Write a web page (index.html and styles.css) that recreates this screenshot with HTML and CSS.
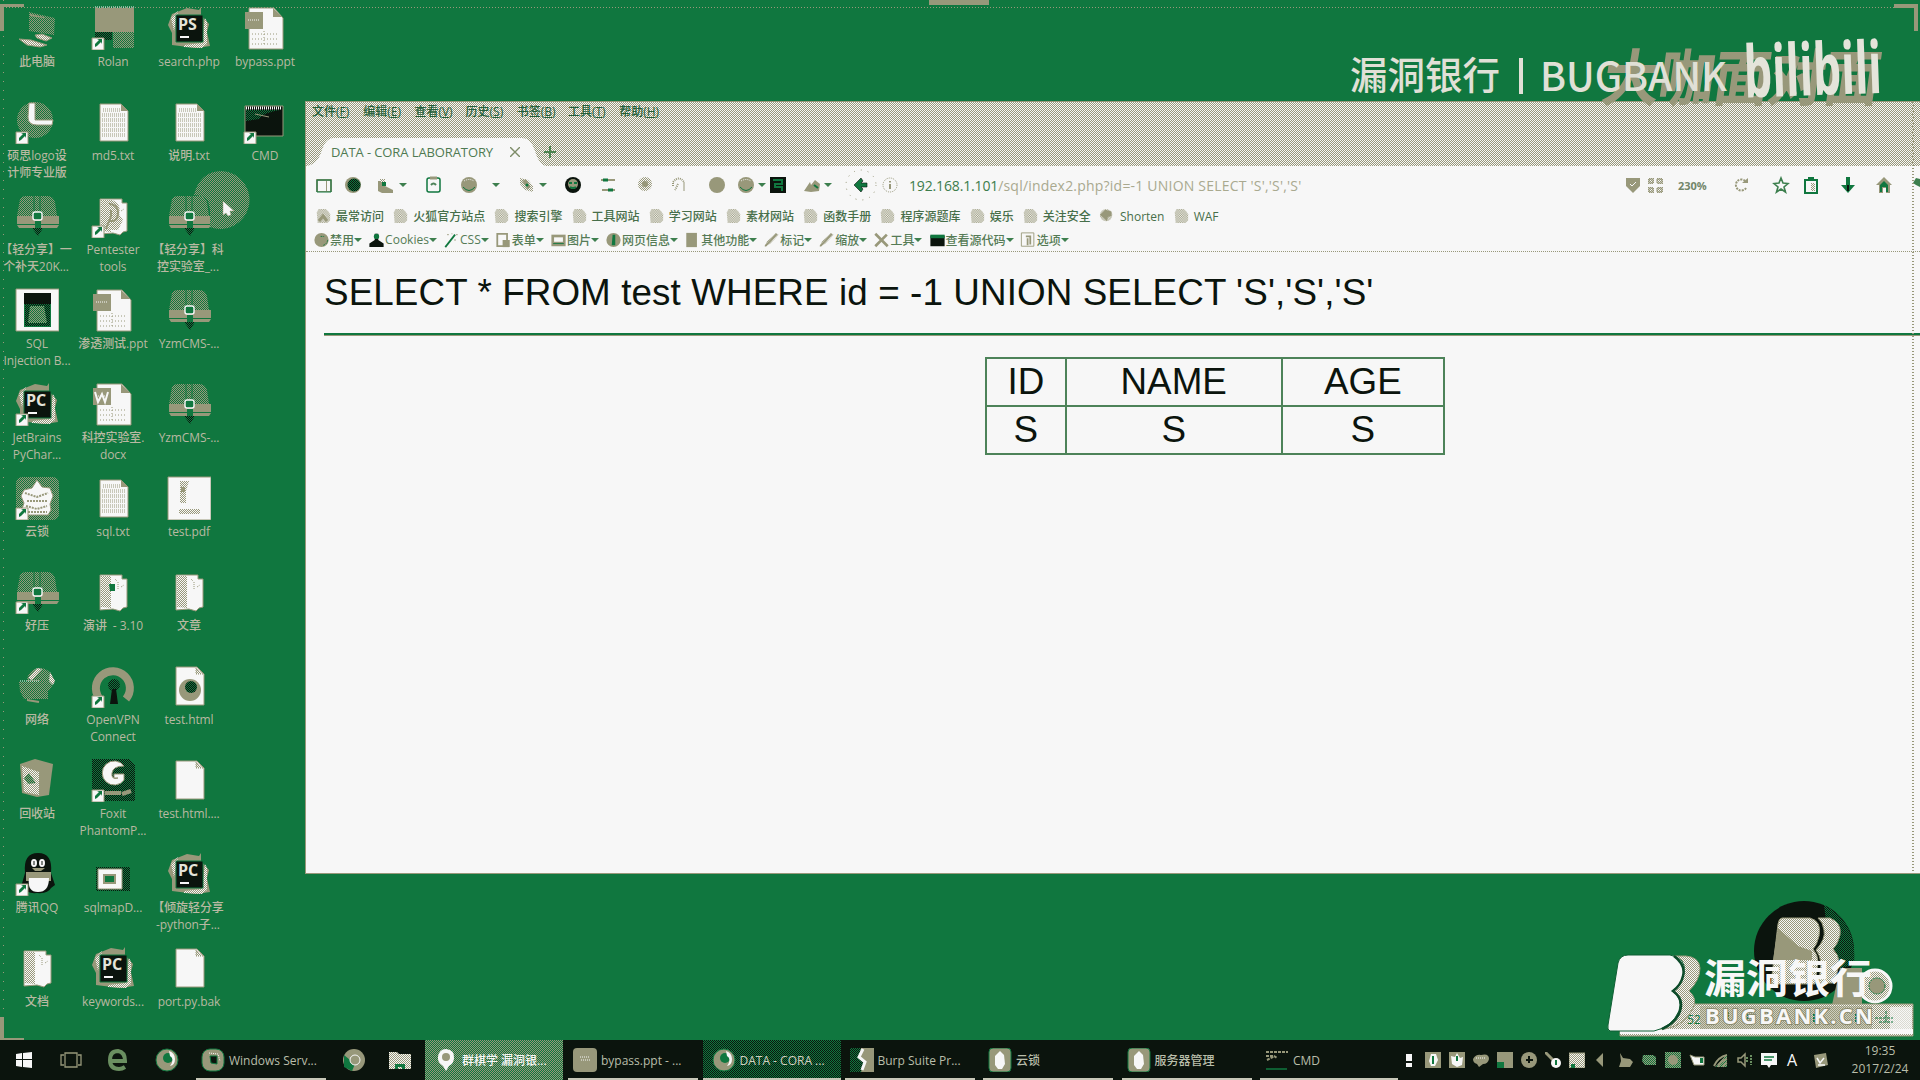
FILE: index.html
```html
<!DOCTYPE html>
<html lang="zh-CN">
<head>
<meta charset="utf-8">
<title>DATA - CORA LABORATORY</title>
<link rel="stylesheet" href="styles.css">
</head>
<body>
<svg class="defs" width="0" height="0" aria-hidden="true">
  <defs>
    <pattern id="tg" width="2" height="2" patternUnits="userSpaceOnUse"><rect width="2" height="2" fill="#10773f"/><path d="M0 0h1v1H0zM1 1h1v1H1z" fill="#98987a" shape-rendering="crispEdges"/></pattern>
    <pattern id="wt" width="2" height="2" patternUnits="userSpaceOnUse"><rect width="2" height="2" fill="#f7f7f7"/><path d="M0 0h1v1H0zM1 1h1v1H1z" fill="#98987a" shape-rendering="crispEdges"/></pattern>
    <pattern id="kg" width="2" height="2" patternUnits="userSpaceOnUse"><rect width="2" height="2" fill="#10773f"/><path d="M0 0h1v1H0zM1 1h1v1H1z" fill="#0b140d" shape-rendering="crispEdges"/></pattern>
  </defs>
  <symbol id="arrow" viewBox="0 0 44 44"><path d="M1 32h12v12H1z" fill="#f7f7f7" stroke="#98987a"/><path d="M4 41v-3l4-4-2-1h5v5l-1-2-4 4z" fill="#10773f"/></symbol>
  <symbol id="pc" viewBox="0 0 44 44"><path d="M14 6l26 6-1 17-25-4z" fill="url(#tg)"/><path d="M15 8l14 3v1l-14-2z" fill="#98987a"/><path d="M4 33l12 1 16 5-7 2-13-2zM20 29l7-1 10 4-6 3-9-3z" fill="url(#wt)" stroke="#98987a"/></symbol>
  <symbol id="rolan" viewBox="0 0 44 44"><path d="M4 2h39v24H4z" fill="#98987a"/><path d="M4 26h17v8H4z" fill="url(#kg)"/><path d="M22 26h21v16H22z" fill="url(#tg)"/><path d="M4 1h39" stroke="#f7f7f7" stroke-dasharray="1 1"/></symbol>
  <symbol id="jb" viewBox="0 0 44 44"><path d="M5 8L20 2l12 2 2-3v8l8 9-2 8 3 14-14 2-24-3 0-12-4-8z" fill="#98987a"/><path d="M38 12l2 4v22l-5 4-18-1 0-2 18-2zM4 12l7-7-4 20z" fill="url(#wt)"/><path d="M9 9h27v27H9z" fill="#0b140d" stroke="#10773f"/><path d="M13 31h9" stroke="#f7f7f7" stroke-width="2"/></symbol>
  <symbol id="ppt" viewBox="0 0 44 44"><path d="M6 2h25l9 10v31H6z" fill="#f7f7f7" stroke="#98987a"/><path d="M30 2v9h9z" fill="#98987a"/><path d="M2 6h18v17H2z" fill="#98987a"/><path d="M5 14h12" stroke="#f7f7f7" stroke-dasharray="1 1"/><path d="M9 28h26M9 33h26M9 38h26M21 25v14" stroke="#98987a" stroke-dasharray="1 2"/></symbol>
  <symbol id="docx" viewBox="0 0 44 44"><use href="#ppt"/><path d="M4 10l3 10 4-8 3 8 3-10" stroke="#f7f7f7" stroke-width="2" fill="none"/></symbol>
  <symbol id="txt" viewBox="0 0 44 44"><path d="M9 4h21l7 7v30H9z" fill="#f7f7f7" stroke="#98987a"/><path d="M12 9h18M12 11h18M11 14h23M11 16h23M11 19h23M11 21h23M11 24h23M11 26h23M11 29h23M11 31h23M11 34h23M11 36h23" stroke="#98987a" stroke-dasharray="1 1"/><path d="M30 4v7h7z" fill="#98987a"/></symbol>
  <symbol id="file" viewBox="0 0 44 44"><path d="M9 3h21l7 7v31H9z" fill="#f7f7f7" stroke="#98987a"/><path d="M29 4v6h7z" fill="url(#wt)" stroke="#98987a" stroke-dasharray="1 1"/></symbol>
  <symbol id="html" viewBox="0 0 44 44"><use href="#file"/><circle cx="23" cy="26" r="11" fill="#98987a"/><circle cx="24" cy="23" r="6" fill="url(#kg)"/></symbol>
  <symbol id="logo" viewBox="0 0 44 44"><circle cx="20" cy="20" r="18" fill="url(#tg)"/><path d="M14 3h6v17h18l-1 5H22q-9 0-9-8z" fill="#f7f7f7" stroke="#98987a"/></symbol>
  <symbol id="cmd" viewBox="0 0 44 44"><path d="M2 6h38v30H2z" fill="#0b140d" stroke="#98987a"/><path d="M3 8h36" stroke="#f7f7f7" stroke-width="3" stroke-dasharray="1 1"/><path d="M3 10h34q-18 3-21 9l-13 2z" fill="url(#kg)"/><path d="M12 14l14 3" stroke="#98987a"/></symbol>
  <symbol id="zip" viewBox="0 0 44 44"><path d="M5 5q2-3 6-3h22q5 0 7 6l2 14H2z" fill="url(#tg)"/><path d="M2 22h42v8H2zM2 31h42l-2 3H4z" fill="#98987a"/><path d="M19 2v16M25 2v16" stroke="#10773f"/><path d="M17 34h11l-5 8z" fill="url(#kg)"/><path d="M20 27h6v7h-6z" fill="#10773f"/><rect x="18" y="18" width="9" height="8" rx="2" fill="#10773f" stroke="#f7f7f7" stroke-width="1.400"/></symbol>
  <symbol id="folder" viewBox="0 0 44 44"><path d="M9 5h22v4h5v28l-4 1-3 3-7-2-13 1z" fill="#f7f7f7" stroke="#98987a"/><path d="M10 6h10v32l-10-1z" fill="url(#wt)"/><path d="M24 9l2 2M27 12v8M30 17l3-2" stroke="#98987a" stroke-dasharray="1 1"/></symbol>
  <symbol id="pent" viewBox="0 0 44 44"><use href="#folder"/><path d="M11 6h10q10 4 7 14l4 6-5 10H12z" fill="url(#wt)"/><path d="M18 10q9 0 9 9t-8 8 M20 16v6l-5 13" fill="none" stroke="#98987a" stroke-width="2"/></symbol>
  <symbol id="sql" viewBox="0 0 44 44"><path d="M1 1h43v42H1z" fill="#f7f7f7" stroke="#98987a"/><path d="M9 5h27v34H9z" fill="#10773f"/><path d="M9 5h27v11H9z" fill="#0b140d"/><path d="M10 38V16h25v22z" fill="url(#kg)"/><path d="M15 18h14l3 17H13z" fill="url(#tg)"/></symbol>
  <symbol id="lock" viewBox="0 0 44 44"><rect x="1" y="1" width="43" height="43" rx="6" fill="url(#tg)"/><path d="M22 4l5 7 8 1 3 8-3 8 1 6-3 5H10l-3-6 2-6-3-7 3-6 8-2z" fill="#f7f7f7" stroke="#98987a"/><path d="M10 17l12 4 11-4M12 25h20M11 30l11 3 10-3M13 36h19" stroke="#98987a" stroke-width="2" stroke-dasharray="2 1" fill="none"/></symbol>
  <symbol id="pdf" viewBox="0 0 44 44"><path d="M1 1h43v43H1z" fill="#f7f7f7" stroke="#98987a"/><path d="M13 5h9l-3 10v12h-6zM12 33h21v5H12z" fill="url(#wt)"/><path d="M14 11h4v5h-4z" fill="#98987a"/></symbol>
  <symbol id="globe" viewBox="0 0 44 44"><circle cx="25" cy="17" r="13" fill="url(#tg)"/><path d="M4 18h29v17H9l-4-8z" fill="url(#tg)"/><path d="M13 14l9-10 5 1-10 11zM35 8l5 9-2 4-4-4z" fill="url(#wt)"/><path d="M5 17h20" stroke="#f7f7f7" stroke-dasharray="1 1"/><path d="M12 36l12 2" stroke="#98987a" stroke-width="2"/></symbol>
  <symbol id="vpn" viewBox="0 0 44 44"><path d="M8 34A17 17 0 1 1 35 35" fill="none" stroke="#98987a" stroke-width="8"/><circle cx="23" cy="21" r="6" fill="url(#kg)"/><path d="M21 25h4l2 15h-8z" fill="#0b140d"/></symbol>
  <symbol id="bin" viewBox="0 0 44 44"><path d="M5 6l15-5 18 5-4 31-12 2-15-4z" fill="#98987a"/><path d="M7 8l17 6v23L9 34z" fill="url(#wt)"/><path d="M9 20l5-5 7 10-8 1z" fill="url(#tg)"/></symbol>
  <symbol id="foxit" viewBox="0 0 44 44"><path d="M1 1h37l6 6v36H1z" fill="url(#kg)"/><path d="M33 8A12 12 0 1 0 33 22v-6H23v4h4q-7 2-6-5t12-7z" fill="#f7f7f7" stroke="#98987a"/><path d="M14 35h16M31 36l9-3" stroke="#98987a" stroke-width="4"/></symbol>
  <symbol id="qq" viewBox="0 0 44 44"><path d="M10 21Q8 1 23 1t13 20l4 12-4 3q-3 6-14 5-10 1-13-5l-3-1z" fill="#0b140d"/><path d="M11 20h25v9H11z" fill="#98987a"/><path d="M14 26h20q0 14-11 14T14 26z" fill="#f7f7f7"/><ellipse cx="19" cy="11" rx="3" ry="4" fill="#f7f7f7"/><ellipse cx="27" cy="11" rx="3" ry="4" fill="#f7f7f7"/><path d="M19 9v4M27 9v4" stroke="#0b140d"/><path d="M17 16h13l-4 3h-6z" fill="#98987a"/></symbol>
  <symbol id="sqlmap" viewBox="0 0 44 44"><path d="M5 15h34v24H5z" fill="url(#kg)"/><path d="M7 17h24v20H7z" fill="#f7f7f7" stroke="#98987a"/><path d="M13 23h11v8H13z" fill="#10773f" stroke="#98987a" stroke-width="2"/></symbol>

  <symbol id="ball" viewBox="0 0 18 18"><circle cx="9" cy="9" r="8" fill="#98987a"/><path d="M3 11q6 7 12 0" stroke="#10773f" fill="none"/><path d="M4 5q5-3 10 0" stroke="#f7f7f7" stroke-dasharray="1 1" fill="none"/></symbol>
  <symbol id="fold" viewBox="0 0 18 18"><path d="M2 5l2-4h8l3 3 2 3v7l-3 3H3z" fill="url(#wt)"/></symbol>
  <symbol id="pen" viewBox="0 0 18 18"><path d="M1 17l3-7L14 1l3 2L8 13z" fill="url(#wt)"/><path d="M2 16L15 2" stroke="#98987a" stroke-width="2"/></symbol>
  <symbol id="ff" viewBox="0 0 24 24"><circle cx="12" cy="12" r="11" fill="#98987a" stroke="#10773f"/><circle cx="13" cy="10" r="5" fill="#10773f"/><path d="M14 3q6 2 6 8t-5 7q5-7 0-10z" fill="#f7f7f7"/></symbol>
  <symbol id="yun" viewBox="0 0 24 24"><rect x="1" y="0" width="22" height="24" rx="4" fill="#98987a" stroke="#10773f"/><path d="M12 3l4 4 1 9-3 5h-4l-3-4V8z" fill="#f7f7f7"/></symbol>
</svg>

<main class="desktop">
  <i class="edge edge-top"></i><i class="edge edge-left"></i><i class="notch"></i><i class="corner tl"></i><i class="corner tr"></i><i class="corner bl"></i>
  <section class="icons">
    <div class="ic"><svg><use href="#pc"/></svg><span>此电脑</span></div>
    <div class="ic"><svg><use href="#logo"/><use href="#arrow"/></svg><span>硕思logo设<br>计师专业版</span></div>
    <div class="ic"><svg><use href="#zip"/></svg><span class="cut">【轻分享】一<br>个补天20K...</span></div>
    <div class="ic"><svg><use href="#sql"/></svg><span>SQL<br>Injection B...</span></div>
    <div class="ic"><svg><use href="#jb"/><text x="11" y="24">PC</text><use href="#arrow"/></svg><span>JetBrains<br>PyChar...</span></div>
    <div class="ic"><svg><use href="#lock"/><use href="#arrow"/></svg><span>云锁</span></div>
    <div class="ic"><svg><use href="#zip"/><use href="#arrow"/></svg><span>好压</span></div>
    <div class="ic"><svg><use href="#globe"/></svg><span>网络</span></div>
    <div class="ic"><svg><use href="#bin"/></svg><span>回收站</span></div>
    <div class="ic"><svg><use href="#qq"/><use href="#arrow"/></svg><span>腾讯QQ</span></div>
    <div class="ic"><svg><use href="#folder"/></svg><span>文档</span></div>

    <div class="ic"><svg><use href="#rolan"/><use href="#arrow"/></svg><span>Rolan</span></div>
    <div class="ic"><svg><use href="#txt"/></svg><span>md5.txt</span></div>
    <div class="ic"><svg><use href="#pent"/><use href="#arrow"/></svg><span>Pentester<br>tools</span></div>
    <div class="ic"><svg><use href="#ppt"/></svg><span>渗透测试.ppt</span></div>
    <div class="ic"><svg><use href="#docx"/></svg><span>科控实验室.<br>docx</span></div>
    <div class="ic"><svg><use href="#txt"/></svg><span>sql.txt</span></div>
    <div class="ic"><svg><use href="#folder"/><path d="M18 14h6v7h-5z" fill="#10773f"/></svg><span>演讲&nbsp; - 3.10</span></div>
    <div class="ic"><svg><use href="#vpn"/><use href="#arrow"/></svg><span>OpenVPN<br>Connect</span></div>
    <div class="ic"><svg><use href="#foxit"/><use href="#arrow"/></svg><span>Foxit<br>PhantomP...</span></div>
    <div class="ic"><svg><use href="#sqlmap"/></svg><span>sqlmapD...</span></div>
    <div class="ic"><svg><use href="#jb"/><text x="11" y="24">PC</text></svg><span>keywords...</span></div>

    <div class="ic"><svg><use href="#jb"/><text x="11" y="24">PS</text></svg><span>search.php</span></div>
    <div class="ic"><svg><use href="#txt"/></svg><span>说明.txt</span></div>
    <div class="ic"><svg><use href="#zip"/></svg><span class="cut">【轻分享】科<br>控实验室_...</span></div>
    <div class="ic"><svg><use href="#zip"/></svg><span>YzmCMS-...</span></div>
    <div class="ic"><svg><use href="#zip"/></svg><span>YzmCMS-...</span></div>
    <div class="ic"><svg><use href="#pdf"/></svg><span>test.pdf</span></div>
    <div class="ic"><svg><use href="#folder"/></svg><span>文章</span></div>
    <div class="ic"><svg><use href="#html"/></svg><span>test.html</span></div>
    <div class="ic"><svg><use href="#file"/></svg><span>test.html....</span></div>
    <div class="ic"><svg><use href="#jb"/><text x="11" y="24">PC</text></svg><span class="cut">【倾旋轻分享<br>-python子...</span></div>
    <div class="ic"><svg><use href="#file"/></svg><span>port.py.bak</span></div>

    <div class="ic"><svg><use href="#ppt"/></svg><span>bypass.ppt</span></div>
    <div class="ic"><svg><use href="#cmd"/><use href="#arrow"/></svg><span>CMD</span></div>
  </section>

  <svg class="cursor" width="60" height="60"><path d="M30 1a29 29 0 1 1-12 56V40l-2-9q-5-6-14-6Q8 1 30 1z" fill="url(#tg)"/><path d="M31 31v14l3-2 2 3 3-1-1-4h4z" fill="#f7f7f7" stroke="#98987a" stroke-width=".5"/></svg>

  <section class="window">
    <nav class="menu"><span>文件(<u>F</u>)</span><span>编辑(<u>E</u>)</span><span>查看(<u>V</u>)</span><span>历史(<u>S</u>)</span><span>书签(<u>B</u>)</span><span>工具(<u>T</u>)</span><span>帮助(<u>H</u>)</span></nav>
    <div class="tabs">
      <div class="tab">
        <svg class="tabshape" width="240" height="28"><path d="M0 28q11-1 15-13Q19 0 28 0h188q9 0 13 13 4 14 11 15z" fill="#f7f7f7"/></svg>
        <span class="title">DATA - CORA LABORATORY</span>
        <svg width="10" height="10"><path d="M0 0l10 10M10 0L0 10" stroke="#7d8c68" stroke-width="1.4"/></svg>
      </div>
      <svg class="plus" width="14" height="12"><path d="M7 0v12M1 6h12" stroke="#4d8350" stroke-width="2"/></svg>
    </div>
    <div class="tools">
      <svg><path d="M1 3h16v13H1z" fill="#98987a"/><path d="M3 5h8v10H3zM12 5h3v10h-3z" fill="#f7f7f7"/><path d="M2 4h14v12H2z" fill="none" stroke="#10773f"/></svg>
      <svg><circle cx="9" cy="9" r="8" fill="#98987a"/><circle cx="10" cy="9" r="6.5" fill="url(#kg)"/></svg>
      <svg><path d="M1 15V5h7v5l8 4v3H5z" fill="#98987a"/><path d="M3 3h5v3H3z" fill="url(#wt)"/><path d="M5 6h4v4H5z" fill="#10773f"/></svg>
      <b></b>
      <svg><rect x="3" y="2" width="13" height="14" rx="2" fill="#f7f7f7" stroke="#10773f" stroke-width="1.5"/><path d="M6 2h7" stroke="#98987a" stroke-width="3"/><path d="M7 9q2.500-3 5 0" stroke="#4d8359" stroke-width="2" fill="none"/></svg>
      <svg><use href="#ball"/></svg>
      <b></b>
      <svg><path d="M2 2l8 2 5 6v6l-8-2-5-6z" fill="url(#wt)"/><path d="M6 4l5 8" stroke="#98987a" stroke-width="4"/><circle cx="9" cy="9" r="1.5" fill="#10773f"/></svg>
      <b></b>
      <svg><circle cx="9" cy="9" r="8" fill="#0b140d"/><circle cx="9" cy="8" r="5" fill="#98987a"/><path d="M5 7h3M10 7h3M6 11q3 2 6 0" stroke="#10773f" stroke-width="2" fill="none"/></svg>
      <svg><path d="M2 4h14M3 14h13" stroke="#98987a" stroke-width="2"/><path d="M4 4h5M9 14h5" stroke="#10773f" stroke-width="3"/></svg>
      <svg><circle cx="9" cy="8" r="7" fill="url(#wt)"/><circle cx="9" cy="8" r="3" fill="#98987a"/></svg>
      <svg><path d="M2 10V6q6-7 11 0v9M7 8l-3 6" stroke="#98987a" stroke-width="2" stroke-dasharray="1 1" fill="none"/></svg>
      <svg><circle cx="9" cy="9" r="8" fill="#98987a"/></svg>
      <svg><use href="#ball"/></svg>
      <b></b>
      <svg><path d="M1 1h16v16H1z" fill="#0b140d"/><path d="M4 4h9v4H6v3h7v4" fill="none" stroke="#10773f" stroke-width="2"/></svg>
      <svg><path d="M1 15l6-9 1 3 4-5 5 4-1 7-8 1z" fill="#98987a"/><path d="M11 9l4 3" stroke="#10773f" stroke-width="2"/></svg>
      <b></b>
      <svg class="back"><circle cx="16" cy="16" r="15" fill="none" stroke="#98987a" stroke-dasharray="1 6"/><path d="M9 16l7-7 2 3-2 2h6v4h-6l2 2-2 3z" fill="#10773f" stroke="#0b140d" stroke-width=".6"/></svg>
      <svg><circle cx="9" cy="9" r="7" fill="none" stroke="#98987a" stroke-dasharray="1 1"/><path d="M9 8v5M9 5v1.5" stroke="#98987a" stroke-width="2"/></svg>
      <span class="url"><em>192.168.1.101</em>/sql/index2.php?id=-1 UNION SELECT 'S','S','S'</span>
      <svg><path d="M2 2h14v8l-7 7-7-7z" fill="#98987a"/><path d="M6 8l2 2 4-4" stroke="#f7f7f7" fill="none"/></svg>
      <svg><path d="M1 2h6v6H1zM10 2h6v6h-6zM1 11h6v6H1zM10 11h6v6h-6z" fill="url(#wt)"/><path d="M2 3h4v4H2zM10 3h5v4h-5zM2 12h4v4H2zM10 12h5v4h-5z" fill="none" stroke="#98987a"/></svg>
      <span class="zoom">230%</span>
      <svg><path d="M13 12A5.500 5.500 0 1 1 13 6" fill="none" stroke="#98987a" stroke-width="2" stroke-dasharray="2 1"/><path d="M9 7h6V2z" fill="#98987a"/></svg>
      <svg><path d="M9 2l2 5 5 .5-4 3.500 1.500 5L9 13l-4.500 3L6 11 2 7.500 7 7z" fill="#f7f7f7" stroke="#3d7f4e" stroke-width="1.600"/></svg>
      <svg><path d="M3 4h12v13H3z" fill="#f7f7f7" stroke="#10773f" stroke-width="2"/><path d="M6 1h6v4H6z" fill="#10773f"/><path d="M9 7h4v8H9z" fill="url(#wt)"/></svg>
      <svg><path d="M7 1h4v8h5l-7 8-7-8h5z" fill="#10773f"/><path d="M9 9v6" stroke="#0b140d" stroke-width="2"/></svg>
      <svg><path d="M1 9l8-8 8 8h-2v8h-4v-5H8v5H4V9z" fill="#98987a"/><path d="M5 9l4-4 4 4v7h-2v-5H7v5H5z" fill="#10773f"/></svg>
      <svg class="edgeicon"><path d="M1 7l3-5 4 1v8L4 9z" fill="#3d7f4e"/></svg>
    </div>
    <div class="bookmarks">
      <span><svg><use href="#fold"/><path d="M4 13l4-5 4 5" stroke="#98987a" stroke-width="3" fill="none"/></svg>最常访问</span><span><svg><use href="#fold"/></svg>火狐官方站点</span><span><svg><use href="#fold"/></svg>搜索引擎</span><span><svg><use href="#fold"/></svg>工具网站</span><span><svg><use href="#fold"/></svg>学习网站</span><span><svg><use href="#fold"/></svg>素材网站</span><span><svg><use href="#fold"/></svg>函数手册</span><span><svg><use href="#fold"/></svg>程序源题库</span><span><svg><use href="#fold"/></svg>娱乐</span><span><svg><use href="#fold"/></svg>关注安全</span><span><svg viewBox="0 0 18 18"><circle cx="8" cy="8" r="7" fill="url(#wt)"/><path d="M1 8l6-6 7 2v5l-4 1-1 5-4-4z" fill="#98987a"/></svg>Shorten</span><span><svg><use href="#fold"/></svg>WAF</span>
    </div>
    <div class="devbar">
      <span><svg viewBox="0 0 18 18"><circle cx="9" cy="9" r="8" fill="#98987a"/><path d="M11 15q5-2 5-7M8 5h4" stroke="#10773f" fill="none" stroke-dasharray="2 1"/></svg>禁用<b></b></span>
      <span><svg viewBox="0 0 18 18"><path d="M7 2h4v7l6 4v4H1v-4l6-4z" fill="#0b140d"/><circle cx="9" cy="5" r="3" fill="#10773f"/></svg>Cookies<b></b></span>
      <span><svg viewBox="0 0 18 18"><path d="M2 17L13 3" stroke="#10773f" stroke-width="2"/><path d="M4 3h2M12 9h2M9 2h1M14 3h2" stroke="#98987a"/></svg>CSS<b></b></span>
      <span><svg viewBox="0 0 18 18"><path d="M2 2h11v14H2z" fill="#f7f7f7" stroke="#98987a" stroke-width="2"/><path d="M8 9h8v8H8z" fill="#98987a"/></svg>表单<b></b></span>
      <span><svg viewBox="0 0 18 18"><path d="M1 3h16v13H1z" fill="#98987a"/><path d="M4 6h10v5H4z" fill="#f7f7f7"/><path d="M3 13h12" stroke="#10773f"/></svg>图片<b></b></span>
      <span><svg viewBox="0 0 18 18"><circle cx="9" cy="9" r="8" fill="#98987a"/><path d="M8 3h3v12H7z" fill="#10773f"/></svg>网页信息<b></b></span>
      <span><svg viewBox="0 0 18 18"><path d="M2 1h12v16H2z" fill="#98987a"/></svg>其他功能<b></b></span>
      <span><svg viewBox="0 0 18 18"><use href="#pen"/></svg>标记<b></b></span>
      <span><svg viewBox="0 0 18 18"><use href="#pen"/></svg>缩放<b></b></span>
      <span><svg viewBox="0 0 18 18"><path d="M2 2l14 14M15 3L2 16" stroke="#98987a" stroke-width="3"/></svg>工具<b></b></span>
      <span><svg viewBox="0 0 18 18"><path d="M1 4h16v12H1z" fill="#0b140d"/><path d="M1 3h16v4H1z" fill="#10773f"/></svg>查看源代码<b></b></span>
      <span><svg viewBox="0 0 18 18"><path d="M1 1h14v15H1z" fill="#f7f7f7" stroke="#98987a"/><path d="M6 5h5v9M8 7v8" stroke="#98987a" stroke-width="2" fill="none"/></svg>选项<b></b></span>
    </div>
    <article class="page">
      <p>SELECT * FROM test WHERE id = -1 UNION SELECT 'S','S','S'</p>
      <hr>
      <table><tr><td class="c1">ID</td><td class="c2">NAME</td><td class="c3">AGE</td></tr><tr><td>S</td><td>S</td><td>S</td></tr></table>
    </article>
    <i class="rule"></i>
  </section>

  <svg class="watermark" width="579" height="110">
    <g transform="skewX(-8)"><text x="271" y="76" class="show" textLength="276" lengthAdjust="spacingAndGlyphs">大咖面对面</text></g>
    <text x="9" y="65" class="bank-cn" textLength="150" lengthAdjust="spacingAndGlyphs">漏洞银行</text>
    <path d="M180 34v36" stroke="#e0e0d6" stroke-width="4"/>
    <text x="199" y="67" class="bank-en" textLength="187" lengthAdjust="spacingAndGlyphs">BUGBANK</text>
    <text x="403" y="71" class="bili" textLength="138" lengthAdjust="spacingAndGlyphs" transform="rotate(-2 475 50)">bilibili</text>
  </svg>

  <svg class="brand" width="320" height="150">
    <circle cx="204" cy="61" r="50" fill="#0b140d"/>
    <path d="M224 15q34 18 30 60l-22 5z" fill="url(#kg)"/>
    <path d="M182 28h28q12 3 9 18-2 9-6 13 5 6 5 13l-3 22h-44l7-60q1-6 4-6z" fill="url(#wt)" stroke="#98987a"/>
    <path d="M178 38l20 18 14 5v9h-39z" fill="#98987a"/>
    <path d="M218 28h12q12 5 10 17-2 9-7 14 6 6 6 14l-4 20h-16l2-20q-1-8-5-13 10-11 8-20-1-8-6-12z" fill="url(#wt)" stroke="#98987a"/>
    <circle cx="275" cy="96" r="16" fill="url(#wt)" stroke="#f7f7f7" stroke-width="3"/><circle cx="277" cy="96" r="8" fill="#98987a" stroke="#10773f" stroke-dasharray="2 1"/>
    <path d="M240 78h22v37h-30z" fill="#98987a"/>
    <path d="M20 114h293v32H20z" fill="url(#wt)" stroke="#98987a"/>
    <path d="M100 116h172v24H100z" fill="#98987a" opacity=".45"/>
    <path d="M60 139h253v5H20v-5z" fill="#f7f7f7"/><path d="M290 117h22v24h-22z" fill="#f7f7f7" opacity=".7"/>
    <text x="87" y="134" class="small">52</text><path d="M275 128h18M286 121v12M279 132h14" stroke="#10773f" stroke-dasharray="3 1"/>
    <path d="M128 122v12M148 124v9M196 122v12M214 124v8M256 124v9" stroke="#10773f" stroke-width="2" stroke-dasharray="2 1"/>
    <path d="M74 66h12q13 1 14 12 0 12-11 23 9 8 4 17-7 17-28 21H41l30-30z" fill="url(#wt)" stroke="#98987a"/>
    <path d="M28 65h42q17 3 14 18-2 12-12 18 11 7 7 20-7 16-25 20H10q-3-1-2-6L18 73q2-8 10-8z" fill="#f7f7f7" stroke="#0f5f34"/>
    <path d="M74 66q12 9 9 20-2 9-10 15 11 8 7 20-4 12-18 18" fill="none" stroke="#0c4a29" stroke-width="2.500"/>
    <text x="104" y="103" class="b-cn" textLength="168" lengthAdjust="spacingAndGlyphs">漏洞银行</text>
    <text x="105" y="134" class="b-en" textLength="168" lengthAdjust="spacing">BUGBANK.CN</text>
  </svg>

  <footer class="taskbar">
    <div class="launch">
      <svg width="18" height="18" viewBox="0 0 18 18"><path d="M1 3l6-1v6H1zM8 2l9-1v7H8zM1 9h6v7l-6-1zM8 9h9v8l-9-1z" fill="#f7f7f7"/></svg>
      <svg width="22" height="16" viewBox="0 0 22 16"><path d="M5 1h12v14H5zM4 3H1v10h3M18 3h3v10h-3" fill="none" stroke="#98987a" stroke-width="1.300"/></svg>
      <svg width="20" height="22" viewBox="0 0 20 22"><path d="M3 12h14q0-9-7-10-8 0-8 9 0 9 9 9 3 0 6-2" fill="none" stroke="#6a8f60" stroke-width="4"/></svg>
      <svg width="24" height="24"><use href="#ff"/></svg>
    </div>
    <div class="task open"><svg viewBox="0 0 24 24"><rect x="1" y="1" width="22" height="22" rx="8" fill="#98987a" stroke="#10773f"/><path d="M9 8h7v8l-6-1z" fill="#0b140d" stroke="#10773f"/><path d="M8 5l9 1 2 7" stroke="#f7f7f7" stroke-dasharray="1 1" fill="none"/></svg><span>Windows Serv...</span></div>
    <div class="pins">
      <svg width="24" height="24"><circle cx="12" cy="12" r="11" fill="#98987a"/><path d="M2 7v12l8 4 3-7z" fill="#10773f"/><circle cx="13" cy="12" r="5" fill="#98987a" stroke="#f7f7f7"/></svg>
      <svg width="24" height="20"><path d="M1 2h8l2 2h12v15H1z" fill="url(#wt)"/><path d="M7 19v-5h10v5h-3v-2h-4v2z" fill="#10773f"/></svg>
    </div>
    <div class="task alert"><svg viewBox="0 0 24 24"><path d="M12 1q9 1 8 9 0 5-5 8l-3 5-3-5q-6-4-5-9 1-8 8-8z" fill="#f7f7f7"/><circle cx="12" cy="9" r="4" fill="#98987a"/></svg><span>群棋学 漏洞银...</span></div>
    <div class="task open"><svg viewBox="0 0 24 24"><rect width="24" height="24" rx="4" fill="#98987a"/><path d="M7 9h10M8 12h9" stroke="#f7f7f7" stroke-dasharray="1 1"/></svg><span>bypass.ppt - ...</span></div>
    <div class="task open on"><svg><use href="#ff"/></svg><span>DATA - CORA ...</span></div>
    <div class="task open"><svg viewBox="0 0 24 24"><path d="M0 0h24v24H0z" fill="#98987a"/><path d="M0 0h11l-2 9 5 4-3 11H0z" fill="url(#kg)"/><path d="M13 1l-4 8 6 5-3 8" stroke="#f7f7f7" stroke-width="3" fill="none"/></svg><span>Burp Suite Pr...</span></div>
    <div class="task open"><svg><use href="#yun"/></svg><span>云锁</span></div>
    <div class="task open"><svg><use href="#yun"/></svg><span>服务器管理</span></div>
    <div class="task open last"><svg viewBox="0 0 24 24"><path d="M1 4h22M1 8h8l3 2M2 12l8-4" stroke="#98987a" stroke-width="2" stroke-dasharray="3 1" fill="none"/><path d="M1 21h21" stroke="#10773f" stroke-width="1.500"/></svg><span>CMD</span></div>
    <div class="tray">
      <svg><path d="M5 2h6v7H5zM5 11h6v4H5z" fill="#f7f7f7"/></svg>
      <svg><path d="M0 0h16v16H0z" fill="#98987a"/><path d="M6 2h5l2 6-3 6H6L4 9z" fill="#f7f7f7"/><path d="M8 4v8" stroke="#10773f" stroke-width="2"/></svg>
      <svg><path d="M0 0h16v16H0z" fill="#98987a"/><path d="M2 4l4 1 2-4 3 5 3-1-1 8-5 2-5-3z" fill="#f7f7f7"/><path d="M8 4v5" stroke="#10773f" stroke-width="2"/></svg>
      <svg><path d="M0 7q3-5 8-4 8-2 8 4-1 5-6 5l-4 3-2-3q-4-1-4-5z" fill="#98987a"/><path d="M3 6h9" stroke="#f7f7f7" stroke-dasharray="1 1"/></svg>
      <svg><path d="M0 0h16v16H0z" fill="#98987a"/><path d="M0 10h7v6H0z" fill="#10773f"/></svg>
      <svg><circle cx="8" cy="8" r="8" fill="#98987a"/><path d="M8 4v7M5 8h7" stroke="#0b140d" stroke-width="2"/></svg>
      <svg><path d="M0 0l8 8" stroke="#98987a" stroke-width="3"/><circle cx="11" cy="11" r="5" fill="#f7f7f7"/><path d="M11 8v5" stroke="#10773f" stroke-width="2"/></svg>
      <svg><path d="M0 1h16v15H0z" fill="url(#wt)" stroke="#98987a"/><path d="M2 16v-4h4v4" fill="#10773f"/></svg>
      <svg><path d="M11 1v14L4 8z" fill="#98987a"/></svg>
      <svg><path d="M3 1l3 5 7 1 3 3-3 5H2l2-6z" fill="#98987a"/></svg>
      <svg><path d="M2 3h10l3 2v8H4L1 9z" fill="url(#tg)"/></svg>
      <svg><path d="M0 0h16v16H0z" fill="url(#tg)"/><circle cx="8" cy="8" r="5" fill="#98987a"/></svg>
      <svg><path d="M1 3l5 2h9v8H5z" fill="#f7f7f7" stroke="#98987a"/><path d="M11 6h3v5h-3z" fill="#10773f"/></svg>
      <svg><path d="M2 15L14 2v13z" fill="url(#tg)"/><path d="M1 14Q5 5 14 3M5 15q2-6 9-8M10 15q1-3 4-4" fill="none" stroke="#98987a" stroke-width="2"/></svg>
      <svg><path d="M1 6h3l4-4v12l-4-4H1z" fill="none" stroke="#98987a" stroke-width="1.500"/><path d="M10 5v6M14 3v10" stroke="#6a8f60" stroke-width="2" stroke-dasharray="2 1"/></svg>
      <svg><path d="M0 1h16v12h-6l-2 3-2-3H0z" fill="#f7f7f7"/><path d="M3 5h10M3 8h8" stroke="#10773f" stroke-width="1.500"/></svg>
      <strong>A</strong>
      <svg><path d="M1 3l12-2 2 12-12 3z" fill="#98987a"/><path d="M4 6l3 5 4-5M5 13h7" stroke="#f7f7f7" fill="none" stroke-width="1.500"/></svg>
    </div>
    <time>19:35<br>2017/2/24</time>
  </footer>
</main>
</body>
</html>
```
FILE: styles.css
```css
:root { --green: #10773f; --dark: #0b140d; --tan: #98987a; --white: #f7f7f7; }
* { box-sizing: border-box; }
body { margin: 0; background: var(--green); font-family: "Open Sans", "Noto Sans CJK SC", sans-serif; font-size: 12px; overflow: hidden; }
svg { display: block; flex: none; }
.defs { position: absolute; }
.desktop { position: relative; width: 1920px; height: 1080px; overflow: hidden; background: var(--green); }

.edge, .notch, .corner { position: absolute; }
.edge-top { top: 7px; left: 0; width: 1920px; height: 1px; background: repeating-linear-gradient(90deg, var(--tan) 0 1px, transparent 1px 3px); }
.edge-left { top: 0; left: 3px; width: 1px; height: 1040px; background: repeating-linear-gradient(var(--tan) 0 1px, transparent 1px 9px); }
.notch { top: 0; left: 929px; width: 60px; height: 5px; background: var(--tan); }
.corner { width: 24px; height: 27px; border: 0 solid var(--tan); }
.tl { left: 0; top: 4px; border-width: 3px 0 0 4px; }
.tr { right: 2px; top: 4px; border-width: 4px 4px 0 0; }
.bl { left: 0; top: 1017px; height: 23px; border-width: 0 0 2px 4px; }

.icons { position: absolute; left: -1px; top: 6px; display: grid; grid-auto-flow: column; grid-template-rows: repeat(11, 94px); grid-auto-columns: 76px; }
.ic { display: flex; flex-direction: column; align-items: center; gap: 3px; color: #b9b9a2; font-weight: 500; line-height: 17px; text-align: center; white-space: nowrap; letter-spacing: -.1px; }
.ic svg { width: 44px; height: 44px; }
.ic text { font: 700 16px "Open Sans", sans-serif; fill: #e4e4d9; letter-spacing: 0; }
.cut { margin-left: -2px; }
.cursor { position: absolute; left: 192px; top: 170px; }

.window { position: absolute; left: 305px; top: 101px; width: 1615px; height: 773px; display: flex; flex-direction: column; border: solid var(--tan); border-width: 1px 0 1px 1px; background: var(--white); overflow: hidden; }
.menu, .tabs { background: repeating-conic-gradient(var(--tan) 0 25%, var(--white) 0 50%) 0 0 / 2px 2px; }
.menu { display: flex; height: 36px; padding-left: 6px; line-height: 20px; color: #235f38; font-size: 12px; font-weight: 500; }
.menu span { width: 51.200px; white-space: nowrap; }
.tabs { display: flex; height: 28px; }
.tab { position: relative; display: flex; align-items: center; width: 240px; padding-left: 25px; justify-content: space-between; padding-right: 26px; }
.tabshape { position: absolute; left: 0; top: 0; }
.tab > :not(.tabshape) { position: relative; }
.title { color: #4f7a52; font-size: 13px; font-weight: 500; letter-spacing: -.1px; white-space: nowrap; }
.plus { margin: 8px 0 0 -3px; }
.tools { display: grid; align-items: center; height: 38px; padding-left: 9px; grid-template-columns: 29px 33px 22px 25px 36px 32px 26px 21px 25px 35px 37px 35px 37px 29px 21px 11px 34px 21px 21px 36px 28px 715px 23px 27px 59px 39px 30px 37px 36px 37px; grid-auto-flow: column; }
.tools svg { width: 18px; height: 18px; }
.tools svg.back { width: 32px; height: 32px; }
.tools svg.edgeicon { width: 8px; }
b { display: block; border: 4px solid transparent; border-top: 4px solid #3d7f4e; border-bottom: 0; width: 0; height: 0; }
.url { font-size: 14px; color: #a9a98f; letter-spacing: .21px; white-space: nowrap; }
.url em { font-style: normal; color: #3c7c4b; letter-spacing: -.15px; }
.zoom { font: 700 11px "Open Sans", sans-serif; color: #72866a; padding-left: 4px; }
.bookmarks { display: flex; align-items: center; height: 24px; padding-left: 9px; gap: 8.200px; color: #476f4a; font-weight: 500; }
.bookmarks span { display: flex; align-items: center; gap: 5px; white-space: nowrap; }
.bookmarks svg { width: 16px; height: 16px; }
.devbar { display: flex; align-items: center; height: 24px; padding-left: 7px; gap: 6.100px; color: #557b55; font-weight: 500; border-bottom: 1px dotted var(--tan); }
.devbar span { display: flex; align-items: center; white-space: nowrap; }
.devbar svg { width: 17px; height: 16px; }
.page { font: 36.800px "Liberation Sans", sans-serif; color: var(--dark); padding: 20px 0 0 18px; }
.page p { margin: 0; line-height: 42px; white-space: nowrap; letter-spacing: .1px; }
.page hr { margin: 19px 0 21px; border: 0; height: 3px; background: var(--green); border-bottom: 1px solid var(--tan); }
.page table { margin-left: 661px; width: 460px; border-collapse: collapse; border: 2px solid #4d8359; }
.page td { height: 48px; padding: 0; text-align: center; border: 2px solid #4d8359; line-height: 44px; }
.c1 { width: 80px; } .c2 { width: 217px; } .c3 { width: 163px; }
.rule { position: absolute; right: 6px; top: 0; bottom: 0; width: 2px; background: repeating-linear-gradient(var(--tan) 0 1px, transparent 1px 3px); }

.watermark { position: absolute; left: 1341px; top: 24px; }
.show { font: 500 60px "Noto Sans CJK SC", sans-serif; fill: var(--tan); stroke: var(--tan); stroke-width: 2px; }
.bank-cn { font: 500 38px "Noto Sans CJK SC", sans-serif; fill: #e0e0d6; }
.bank-en { font: 500 40px "Noto Sans CJK SC", sans-serif; fill: #e0e0d6; }
.bili { font: 700 72px "Open Sans", sans-serif; fill: #e4e4da; }
.brand { position: absolute; left: 1600px; top: 890px; }
.b-cn { font: 700 40px "Noto Sans CJK SC", sans-serif; fill: var(--white); }
.b-en { font: 700 22px "Open Sans", sans-serif; fill: var(--white); stroke: #8b8b6e; stroke-width: 2px; paint-order: stroke; }
.small { font: 12px "Open Sans", sans-serif; fill: #10773f; }

.taskbar { position: absolute; left: 0; top: 1040px; width: 1920px; height: 40px; display: flex; background: var(--dark); color: #b9beaa; font-weight: 500; }
.launch { display: flex; align-items: center; justify-content: space-between; width: 196px; padding: 0 17px 0 15px; }
.pins { display: flex; align-items: center; gap: 22px; width: 99px; padding-left: 16px; }
.task { display: flex; align-items: center; gap: 4px; width: 130px; padding-left: 5px; margin-right: 8.500px; white-space: nowrap; }
.task svg { width: 24px; height: 24px; }
.launch + .task { margin-right: 0; }
.open { box-shadow: inset 0 -2px #c8c8b8; }
.alert { width: 138px; padding-left: 9px; margin-right: 5px; color: var(--white); background: repeating-conic-gradient(var(--tan) 0 25%, #10773f 0 50%) 0 0 / 2px 2px; }
.on { width: 138px; padding-left: 9px; margin: 0 4px 0 -4px; color: #d0d0c0; background: repeating-conic-gradient(var(--dark) 0 25%, #10773f 0 50%) 0 0 / 2px 2px; }
.last { width: 138px; margin-right: 0; }
.tray { display: grid; align-items: center; margin-left: 3px; grid-template-columns: repeat(7, 24px) 23px 25px 24px 24px 24px 24px 24px 24px 24px 28px 18px; }
.tray svg { width: 16px; height: 16px; }
.tray strong { font: 500 16px "Open Sans", sans-serif; color: var(--white); padding-left: 2px; }
.taskbar time { margin-left: 18px; line-height: 18px; padding-top: 2px; text-align: center; width: 62px; }
```
